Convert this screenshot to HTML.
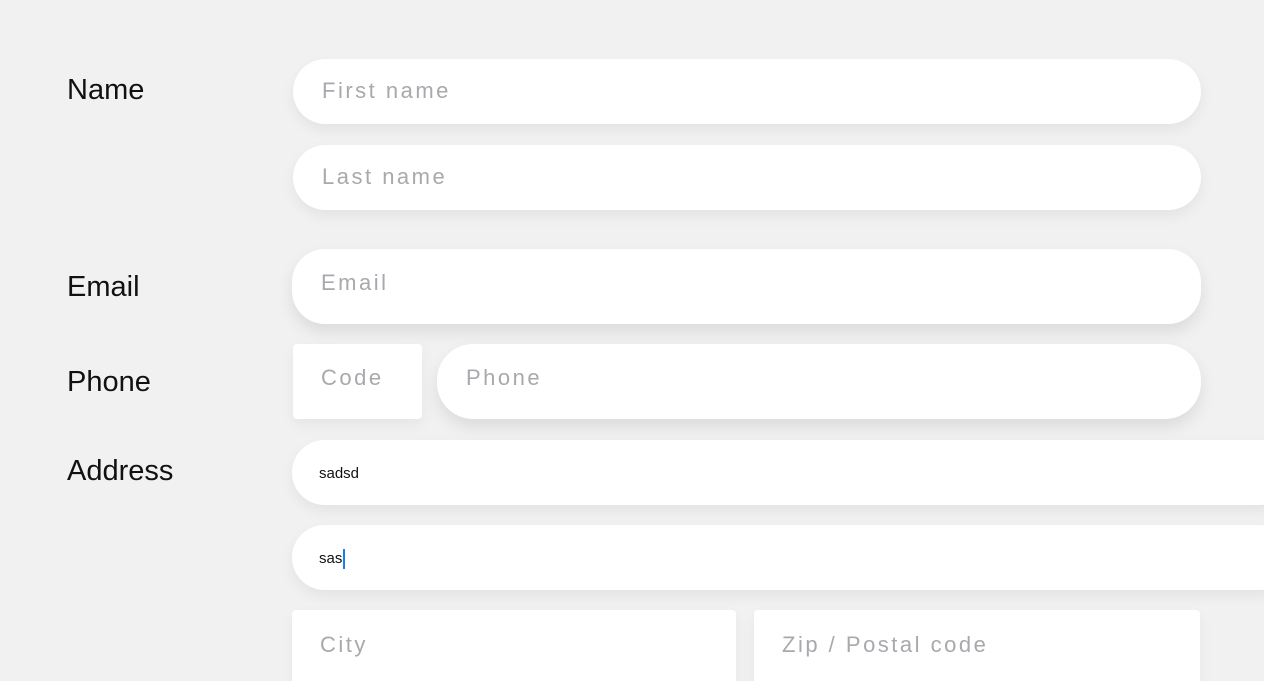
<!DOCTYPE html>
<html><head><meta charset="utf-8"><style>
html,body{margin:0;padding:0;width:1264px;height:681px;overflow:hidden;background:#f1f1f1;font-family:"Liberation Sans",sans-serif;position:relative}
.l{position:absolute;left:67px;font-size:29px;color:#111}
.f{position:absolute;background:#fff;box-sizing:border-box;color:#a9a9ad;font-size:22px;letter-spacing:2.5px;padding-left:29px;display:flex;align-items:center}
.p{border-radius:33px;box-shadow:0 6px 14px rgba(0,0,0,0.06)}
.sq{border-radius:4px;box-shadow:0 6px 14px rgba(0,0,0,0.05)}
.v{color:#111;font-size:15px;letter-spacing:0;padding-left:27px}
</style></head><body>
<div class="l" style="top:74px">Name</div>
<div class="l" style="top:271px">Email</div>
<div class="l" style="top:366px">Phone</div>
<div class="l" style="top:455px">Address</div>

<div class="f p" style="left:293px;top:59px;width:908px;height:65px;padding-bottom:1px">First name</div>
<div class="f p" style="left:293px;top:145px;width:908px;height:65px;padding-bottom:1px">Last name</div>
<div class="f p" style="left:292px;top:249px;width:909px;height:75px;padding-bottom:7px;box-shadow:0 8px 16px rgba(0,0,0,0.09)">Email</div>
<div class="f sq" style="left:293px;top:344px;width:129px;height:75px;padding-left:28px;padding-bottom:7px">Code</div>
<div class="f p" style="left:437px;top:344px;width:764px;height:75px;padding-bottom:7px;border-radius:36px;box-shadow:0 8px 16px rgba(0,0,0,0.09)">Phone</div>
<div class="f p v" style="left:292px;top:440px;width:1000px;height:65px;padding-top:2px">sadsd</div>
<div class="f p v" style="left:292px;top:525px;width:1000px;height:65px;padding-top:2px">sas<span style="display:inline-block;width:1.5px;height:20px;background:#1a7fe6;margin-left:1px"></span></div>
<div class="f sq" style="left:292px;top:610px;width:444px;height:90px;align-items:flex-start;padding-top:22px;padding-left:28px">City</div>
<div class="f sq" style="left:754px;top:610px;width:446px;height:90px;align-items:flex-start;padding-top:22px;padding-left:28px">Zip / Postal code</div>
</body></html>
